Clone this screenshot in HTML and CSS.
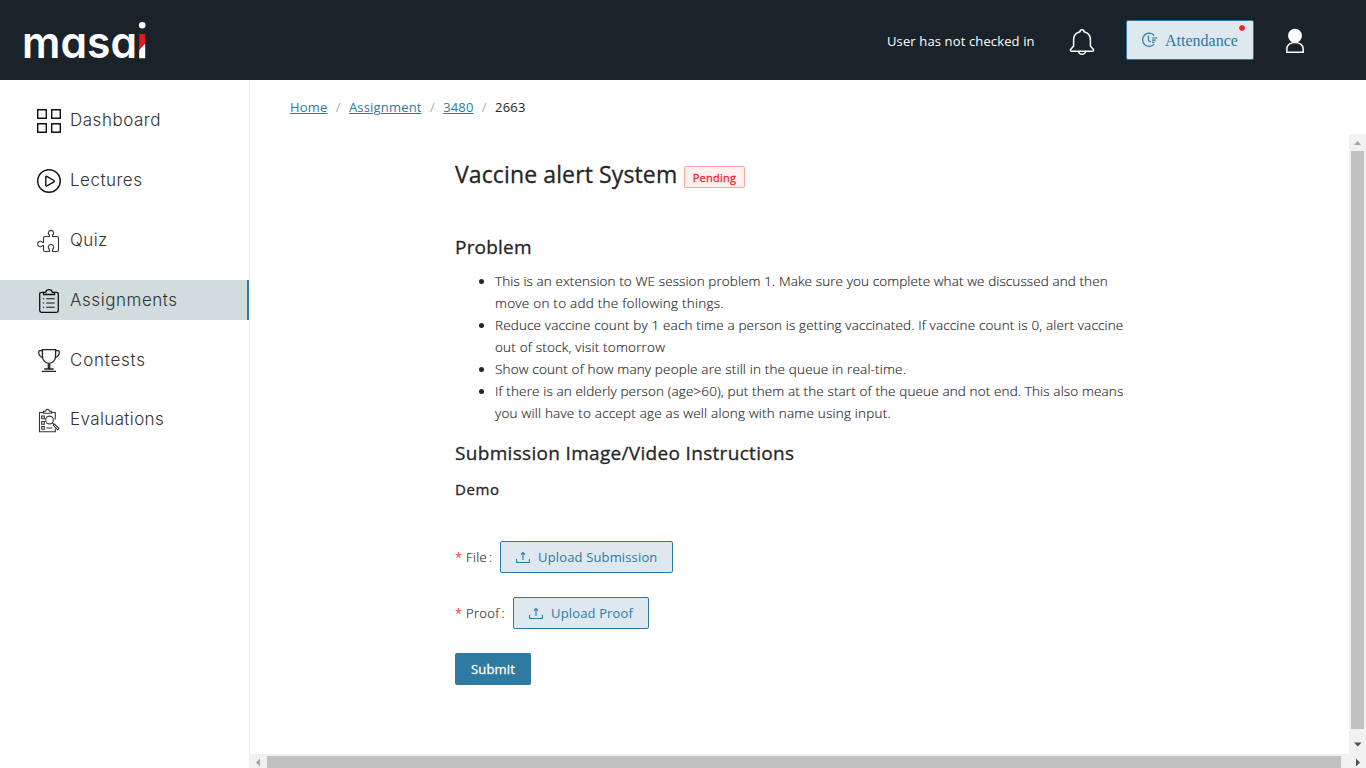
FILE: index.html
```html
<!DOCTYPE html>
<html lang="en">
<head>
<meta charset="utf-8">
<title>Vaccine alert System</title>
<link rel="stylesheet" href="styles.css">
</head>
<body>
<div class="page">
  <header class="header">
    <svg class="logo" width="126" height="44" viewBox="0 0 126 44">
      <text class="logo-text" x="-2" y="38" textLength="115" lengthAdjust="spacingAndGlyphs">masa</text>
      <circle cx="118.2" cy="5.3" r="3.3" fill="#fff"/>
      <path d="M115.2 14h6v10l-6 6z" fill="#e01b22"/>
      <path d="M121.2 23.5V38.3h-6V30z" fill="#fff"/>
    </svg>
    <div class="tools">
      <span class="status">User has not checked in</span>
      <svg class="bell" width="26" height="28" viewBox="0 0 26 28" fill="none" stroke="#fff" stroke-width="1.5" stroke-linejoin="round">
        <path d="M11 3.8a2 2 0 1 1 4 0c4 1 6.400 4.200 6.400 8v6.200l2.800 3.300c.8 1 .3 2-.9 2H2.700c-1.200 0-1.700-1-.9-2L4.600 18v-6.200c0-3.800 2.400-7 6.400-8z"/>
        <path d="M9.500 23.500c.6 3.800 6.400 3.800 7 0"/>
      </svg>
      <button class="btn attendance">
        <svg width="17" height="16" viewBox="0 0 17 16" fill="none" stroke="#2e7aa0" stroke-width="1.200">
          <path d="M13.200 3.500A6.600 6.600 0 1 0 13.200 12.100M7.500 3.500v5.200l2.400 1.200M11 6h5.200M11 8.200h3.800M11 10.400h2.500"/>
        </svg>
        <span class="attendance-text">Attendance</span>
        <i class="dot"></i>
      </button>
      <svg class="user" width="20" height="26" viewBox="0 0 20 26">
        <circle cx="10" cy="7.700" r="7" fill="#fff"/>
        <path d="M1.800 24.300v-3.500c0-8.400 16.400-8.400 16.400 0v3.500z" fill="#192329" stroke="#fff" stroke-width="1.500"/>
      </svg>
    </div>
  </header>
  <div class="body">
    <nav class="sidebar">
      <a class="item"><svg class="icon" viewBox="0 0 26 26"><path stroke-width="1.400" d="M.7.7h8.600v8.600H.7zM14.700.7h8.600v8.600h-8.600zM.7 14.700h8.600v8.600H.7zM14.700 14.700h8.600v8.600h-8.600z"/></svg><span class="l1">Dashboard</span></a>
      <a class="item"><svg class="icon" viewBox="0 0 26 26"><circle cx="12" cy="12" r="11.300" stroke-width="1.400"/><path stroke-width="1.400" d="M8.800 8v8.200c0 .7.500 1 1.100.7l7-4.100c.6-.4.6-.9 0-1.300l-7-4.200c-.6-.3-1.100 0-1.100.7z"/></svg><span class="l2">Lectures</span></a>
      <a class="item"><svg class="icon" viewBox="0 0 26 26"><path stroke="#333" d="M12.500 7.500V6.300a2.700 2.700 0 1 1 3 0v1.200h4.500q1.500 0 1.500 1.500v12q0 1.500-1.500 1.500h-4.500v-2a2.700 2.700 0 1 0-3 0v2H8q-1.500 0-1.500-1.500v-4.500H5.600a2.700 2.700 0 1 1 0-3h.9V9q0-1.500 1.500-1.500z"/></svg><span class="l3">Quiz</span></a>
      <a class="item active"><svg class="icon" viewBox="0 0 26 26"><path stroke-width="1.300" d="M6.500 3.300H4.500q-1.800 0-1.800 1.800v16.500q0 1.800 1.800 1.800h15q1.800 0 1.800-1.800V5.100q0-1.800-1.800-1.800h-2M6.500 3.300v2.200h11V3.300h-2.200C14.800-.2 9.200-.2 8.700 3.300z"/><path d="M9.300 9.700h8.400M9.300 14h8.400M9.300 18.300h8.400M5.900 9.700h1.300M5.900 14h1.300M5.900 18.300h1.300"/></svg><span class="l4">Assignments</span></a>
      <a class="item"><svg class="icon" viewBox="0 0 26 26"><path stroke-width="1.300" stroke="#222" d="M5.400.7h13.200v6c0 4.500-2.800 7.600-6.600 7.600S5.400 11.200 5.400 6.700zM5.400 1.700H2.700Q1.400 2 1.700 4c.3 2.300 1.900 4 4 4.500M18.600 1.700h2.700q1.300.3 1 2.300c-.3 2.300-1.900 4-4 4.500M11.300 14.300v5.500M12.700 14.300v5.500M7.300 20h9.400M5 22.400h14"/></svg><span class="l5">Contests</span></a>
      <a class="item last"><svg class="icon" viewBox="0 0 26 26"><path stroke="#333" d="M6.500 4.500h-4v19.200h15.800v-3M14 4.500h4.300v7M6.500 5.300h8V3.200h-2C12 .8 9 .8 8.500 3.200h-2zM4.700 8h2.600v2.800H4.700zM4.700 13.500h2.600v2.800H4.700zM4.700 18.500h2.600v2.800H4.700zM9.300 20h6"/><circle cx="12.500" cy="12" r="3.900" stroke="#333"/><path stroke="#333" d="M15.200 14.800l1.600 1.400M16.200 17.300l1.300-1.300 4.400 4.500-1.300 1.300z"/></svg><span class="l6">Evaluations</span></a>
    </nav>
    <main class="main">
      <div class="crumbs"><a>Home</a><i>/</i><a>Assignment</a><i>/</i><a>3480</a><i>/</i><span>2663</span></div>
      <div class="scroller">
        <div class="view">
          <article class="content">
            <div class="title-row"><h1>Vaccine alert System</h1><span class="tag">Pending</span></div>
            <h2 class="problem">Problem</h2>
            <ul class="list">
              <li><span class="t1">This is an extension to WE session problem 1. Make sure you complete what we discussed and then</span><br><span class="t2">move on to add the following things.</span></li>
              <li><span class="t3">Reduce vaccine count by 1 each time a person is getting vaccinated. If vaccine count is 0, alert vaccine</span><br><span class="t4">out of stock, visit tomorrow</span></li>
              <li><span class="t5">Show count of how many people are still in the queue in real-time.</span></li>
              <li><span class="t6">If there is an elderly person (age&gt;60), put them at the start of the queue and not end. This also means</span><br><span class="t7">you will have to accept age as well along with name using input.</span></li>
            </ul>
            <h2 class="instructions">Submission Image/Video Instructions</h2>
            <h3>Demo</h3>
            <div class="field">
              <label class="file"><b>*</b><span>File</span><i>:</i></label>
              <button class="btn upload-file"><svg width="14" height="14" viewBox="0 0 14 14"><path d="M.6 9v3.500h12.800V9M7 10V3M4.900 4.700L7 2.500l2.100 2.200"/></svg><span>Upload Submission</span></button>
            </div>
            <div class="field">
              <label class="proof"><b>*</b><span>Proof</span><i>:</i></label>
              <button class="btn upload-proof"><svg width="14" height="14" viewBox="0 0 14 14"><path d="M.6 9v3.500h12.800V9M7 10V3M4.900 4.700L7 2.500l2.100 2.200"/></svg><span>Upload Proof</span></button>
            </div>
            <button class="submit">Submit</button>
          </article>
          <div class="vbar">
            <svg width="17" height="17"><path d="M5 11l3.500-4 3.500 4z" fill="#a3a3a3"/></svg>
            <div class="vthumb"></div>
            <svg width="17" height="25"><path d="M5 13.500h7.500l-3.700 4z" fill="#505050"/></svg>
          </div>
        </div>
        <div class="hbar">
          <svg width="17" height="14"><path d="M10 4.500v8l-4-4z" fill="#a3a3a3"/></svg>
          <div class="hthumb"></div>
          <svg width="25" height="14"><path d="M15 4.500v8l4-4z" fill="#505050"/></svg>
        </div>
      </div>
    </main>
  </div>
</div>
</body>
</html>
```
FILE: styles.css
```css
* { box-sizing: border-box; }
body { margin: 0; background: #fff; font-family: "Open Sans", "Noto Sans", sans-serif; font-size: 13px; color: #262626; overflow: hidden; }
h1, h2, h3, ul { margin: 0; padding: 0; }
h1, h2, h3, .tag, .submit { -webkit-text-stroke: .3px currentColor; }
button { font: inherit; margin: 0; padding: 0; }
svg { flex: none; }
.page { width: 1366px; height: 768px; display: flex; flex-direction: column; }
.header { height: 80px; background: #192329; display: flex; justify-content: space-between; padding: 20px 61px 0 24px; }
.logo { overflow: visible; }
.logo-text { font-family: Inter, sans-serif; font-weight: 600; font-size: 43.5px; fill: #fff; font-feature-settings: "cv11" 1; }
.tools { display: flex; align-items: flex-start; }
.status { color: #fff; width: 182px; line-height: 40px; padding-top: 1px; white-space: nowrap; letter-spacing: .13px; }
.bell { margin: 8px 31px 0 0; }
.btn { display: flex; align-items: center; background: #dfe8ee; border: 1px solid #2e7aa0; border-radius: 2px; color: #2e7aa0; white-space: nowrap; }
.attendance { width: 128px; height: 40px; padding: 0 14px; gap: 7px; position: relative; margin-right: 31px; }
.attendance-text { font-family: "Liberation Serif", serif; font-size: 16px; padding-top: 2px; }
.dot { position: absolute; right: 7px; top: 3px; width: 8px; height: 8px; border-radius: 50%; background: #e0282e; border: 1px solid #fff; }
.user { margin-top: 8px; }
.body { flex: 1; display: flex; min-height: 0; }
.sidebar { width: 250px; border-right: 1px solid #f0f0f5; padding-top: 20px; display: flex; flex-direction: column; gap: 20px; }
.item { height: 40px; display: flex; align-items: flex-start; padding: 9px 0 0 37px; font-family: Inter, sans-serif; font-weight: 300; font-size: 17px; line-height: 22px; color: #333; }
.item.active { background: #d1dcdd; border-right: 2px solid #2e7aa0; }
.item.last { margin-top: -1px; }
.icon { width: 26px; height: 26px; margin-right: 7px; fill: none; stroke: #111; stroke-width: 1.1; overflow: visible; }
.l1 { letter-spacing: .52px; }
.l2 { letter-spacing: .5px; }
.l3 { letter-spacing: .4px; }
.l4 { letter-spacing: .55px; }
.l5 { letter-spacing: .75px; }
.l6 { letter-spacing: .38px; }
.main { flex: 1; display: flex; flex-direction: column; min-width: 0; }
.crumbs { height: 54px; padding-left: 40px; display: flex; line-height: 22px; padding-top: 16px; letter-spacing: .18px; }
.crumbs a { color: #2e7aa0; text-decoration: underline; }
.crumbs i { font-style: normal; color: #aaa; width: 21.5px; text-align: center; }
.scroller { flex: 1; display: flex; flex-direction: column; }
.view { flex: 1; display: flex; justify-content: space-between; }
.content { padding: 22px 0 0 205px; white-space: nowrap; }
.title-row { display: flex; height: 80px; }
h1 { width: 229px; font-size: 23px; line-height: 36px; font-weight: 400; letter-spacing: .12px; }
.tag { width: 61px; height: 22px; margin-top: 10px; border: 1px solid #ffa39e; border-radius: 2px; background: #fff1f0; color: #f5222d; font-size: 11px; letter-spacing: .28px; line-height: 22px; text-align: center; }
h2 { font-size: 19px; line-height: 28px; font-weight: 400; letter-spacing: .32px; }
h2.problem { margin-bottom: 9px; margin-top: -3px; letter-spacing: .2px; }
.list { padding-left: 40px; line-height: 22px; margin-bottom: 15px; font-weight: 300; font-size: 13.5px; }
.list span, .field label { -webkit-text-stroke: .15px currentColor; }
.t1 { letter-spacing: .1px; }
.t2 { letter-spacing: .25px; }
.t3 { letter-spacing: .15px; }
.t4 { letter-spacing: .2px; }
.t5 { letter-spacing: .16px; }
.t6 { letter-spacing: .13px; }
.t7 { letter-spacing: .21px; }
h3 { font-size: 15px; line-height: 24px; margin-top: 10px; margin-bottom: 40px; font-weight: 400; letter-spacing: .6px; }
.field { height: 32px; display: flex; align-items: center; margin-bottom: 24px; }
.field label { display: flex; font-weight: 300; letter-spacing: .35px; }
.field b { color: #ff4d4f; font-weight: 400; width: 11px; letter-spacing: 0; }
.field i { font-style: normal; margin-left: 2px; }
.file { width: 45px; }
.proof { width: 58px; }
.field .btn { height: 32px; padding-left: 15px; gap: 8px; letter-spacing: .15px; }
.field svg { fill: none; stroke: #2e7aa0; stroke-width: 1.1; }
.upload-file { width: 173px; }
.upload-proof { width: 136px; }
.submit { width: 76px; height: 32px; border: 0; border-radius: 2px; background: #2e7aa0; color: #fff; letter-spacing: .2px; }
.vbar { width: 17px; background: #f1f1f1; display: flex; flex-direction: column; }
.vthumb { flex: 1; margin: 0 2px; background: #c1c1c1; }
.hbar { height: 14px; background: #f1f1f1; display: flex; }
.hthumb { flex: 1; margin-top: 2px; background: #c1c1c1; }
```
